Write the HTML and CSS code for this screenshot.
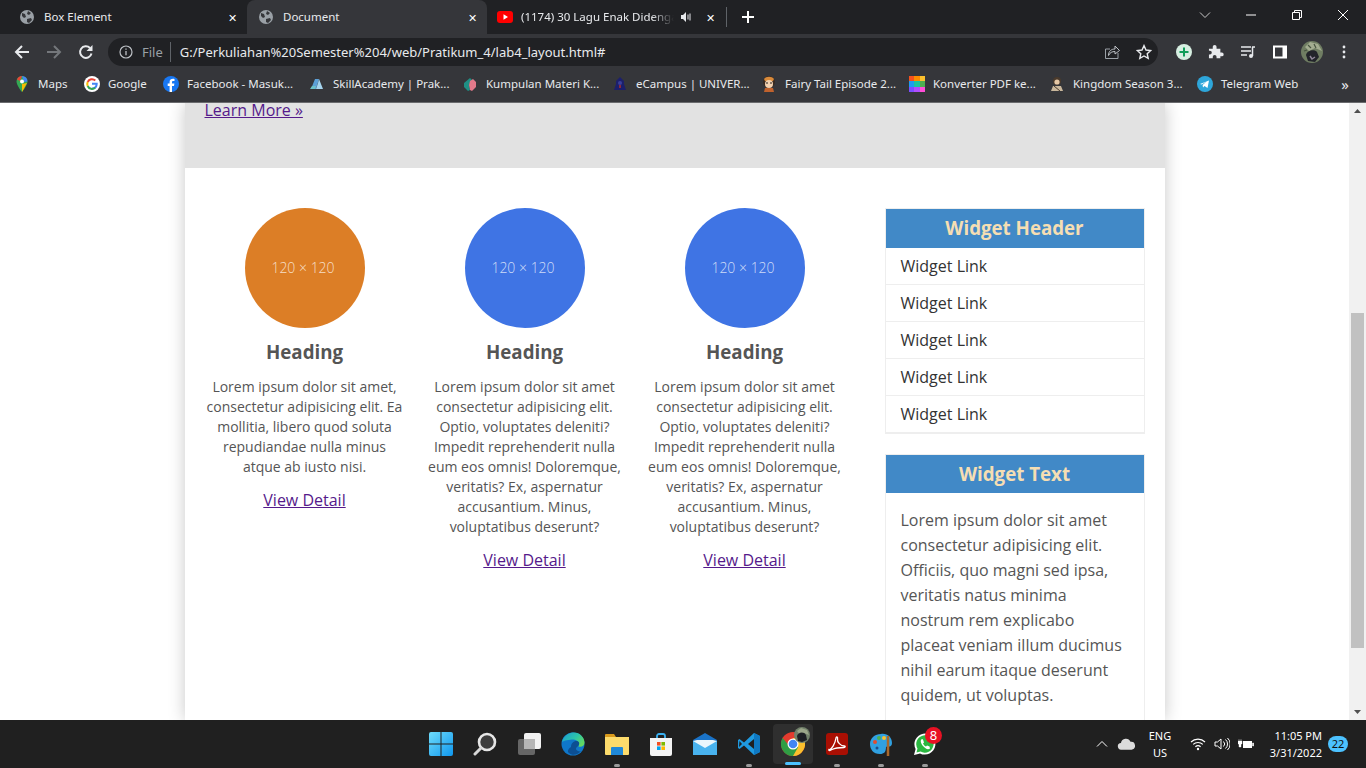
FILE: index.html
```html
<!DOCTYPE html>
<html lang="en">
<head>
  <meta charset="UTF-8">
  <title>Document</title>
  <link rel="stylesheet" href="styles.css">
</head>
<body>
  <div class="tabstrip">
    <div class="tab">
      <svg class="fav" viewBox="0 0 16 16"><circle cx="8" cy="8" r="7" fill="#9aa0a6"/><path d="M3 4l3 1 1 3-2 1-2-2zM9 2l3 2-2 2-2-1zM8 10l4-1 1 2-3 3-2-1z" fill="#35363a"/></svg>
      <span class="tab-title">Box Element</span>
      <span class="tab-x">✕</span>
    </div>
    <div class="tab tab-active">
      <svg class="fav" viewBox="0 0 16 16"><circle cx="8" cy="8" r="7" fill="#9aa0a6"/><path d="M3 4l3 1 1 3-2 1-2-2zM9 2l3 2-2 2-2-1zM8 10l4-1 1 2-3 3-2-1z" fill="#35363a"/></svg>
      <span class="tab-title">Document</span>
      <span class="tab-x">✕</span>
    </div>
    <div class="tab tab-yt">
      <svg class="fav" viewBox="0 0 16 16"><rect y="2" width="16" height="12" rx="3" fill="#f00"/><path d="M6.500 5.300v5.400L11 8z" fill="#fff"/></svg>
      <span class="tab-title tab-fade">(1174) 30 Lagu Enak Didengar</span>
      <svg class="tab-sound" viewBox="0 0 12 12"><path d="M1 4h2l3-3v10L3 8H1z" fill="#e8eaed"/><path d="M8 3.500v5M10 2.500v7" stroke="#e8eaed" fill="none"/></svg>
      <span class="tab-x">✕</span>
    </div>
    <div class="tab-sep"></div>
    <svg class="newtab" viewBox="0 0 14 14"><path d="M7 1v12M1 7h12" stroke="#fff" stroke-width="2"/></svg>
    <div class="win-controls">
      <svg viewBox="0 0 12 12"><path d="M1 3.500l5 5 5-5" stroke="#c8c8c8" fill="none"/></svg>
      <svg viewBox="0 0 12 12"><path d="M1 6h10" stroke="#fff"/></svg>
      <svg viewBox="0 0 12 12"><path d="M1.500 3.500h7v7h-7zM3.500 3.500v-2h7v7h-2" stroke="#fff" fill="none"/></svg>
      <svg viewBox="0 0 12 12"><path d="M1 1l10 10M11 1L1 11" stroke="#fff"/></svg>
    </div>
  </div>

  <div class="toolbar">
    <button class="tool"><svg viewBox="0 0 16 16"><path d="M15 8H2M8 2L2 8l6 6" stroke="#e8eaed" stroke-width="2" fill="none"/></svg></button>
    <button class="tool"><svg viewBox="0 0 16 16"><path d="M1 8h13M8 2l6 6-6 6" stroke="#74777b" stroke-width="2" fill="none"/></svg></button>
    <button class="tool"><svg viewBox="0 0 16 16"><path d="M13.500 9.500A5.800 5.800 0 1 1 12 4" stroke="#e8eaed" stroke-width="2" fill="none"/><path d="M14.500 1v6h-6z" fill="#e8eaed"/></svg></button>
    <div class="omnibox">
      <svg class="omni-info" viewBox="0 0 14 14"><circle cx="7" cy="7" r="6" stroke="#bdc1c6" stroke-width="1.200" fill="none"/><path d="M7 6v4.200M7 3.400v1.400" stroke="#bdc1c6" stroke-width="1.300"/></svg>
      <span class="omni-file">File</span>
      <span class="omni-sep"></span>
      <span class="omni-url">G:/Perkuliahan%20Semester%204/web/Pratikum_4/lab4_layout.html#</span>
      <svg class="omni-share" viewBox="0 0 16 16"><path d="M14 9v5.500H1.500V5H6" stroke="#9aa0a6" fill="none"/><path d="M4.500 11.500c0-4.500 3-6.500 6.500-6.500V2l4.500 4.500L11 10V7.500c-3 0-5 1-6.500 4z" stroke="#bdc1c6" fill="none"/></svg>
      <svg class="omni-star" viewBox="0 0 16 16"><path d="M8 1.600l2 4.400 4.700.5-3.500 3.200 1 4.700L8 12l-4.200 2.400 1-4.700-3.500-3.200L6 6z" stroke="#e8eaed" stroke-width="1.400" fill="none"/></svg>
    </div>
    <button class="tool tool-first"><svg viewBox="0 0 16 16"><circle cx="8" cy="8" r="8" fill="#d7efe2"/><path d="M8 3.500v9M3.500 8h9" stroke="#0f9d58" stroke-width="2"/></svg></button>
    <button class="tool"><svg viewBox="0 0 16 16"><path d="M1 5h4V3a2 2 0 0 1 4 0v2h4v4h1.500a2 2 0 0 1 0 4H13v2H9v-1.500a2 2 0 0 0-4 0V15H1v-4h1a2 2 0 0 0 0-4H1z" fill="#e8eaed" transform="scale(.95)"/></svg></button>
    <button class="tool"><svg viewBox="0 0 16 16"><path d="M1 3h10M1 7h10M1 11h6" stroke="#e8eaed" stroke-width="1.500"/><path d="M12 3h3M12.500 3v9" stroke="#e8eaed" stroke-width="1.500" fill="none"/><circle cx="11" cy="12" r="2" fill="#e8eaed"/></svg></button>
    <button class="tool"><svg viewBox="0 0 16 16"><path d="M1 1.500h14v13H1z" fill="#fff"/><path d="M3 3.500h7.500v9H3z" fill="#35363a"/></svg></button>
    <button class="tool"><svg class="avatar" viewBox="0 0 22 22"><circle cx="11" cy="11" r="11" fill="#6f7d62"/><path d="M4 6l5-5 8 2 4 7-7-3-6 3z" fill="#a3ad90"/><path d="M7 4l3 3M13 3l2 4M3 10l3-1" stroke="#47543f" stroke-width="1.200"/><path d="M5 14c1-5 9-6 11-3l2 5-4 5-7-1z" fill="#22242a"/><path d="M9 15l2 3 3-2" stroke="#8f8698" stroke-width="1.500" fill="none"/></svg></button>
    <button class="tool"><svg viewBox="0 0 16 16"><circle cx="8" cy="3" r="1.400" fill="#e8eaed"/><circle cx="8" cy="8" r="1.400" fill="#e8eaed"/><circle cx="8" cy="13" r="1.400" fill="#e8eaed"/></svg></button>
  </div>

  <div class="bookmarks">
    <a class="bm"><svg viewBox="0 0 16 16"><path d="M8 0a5.500 5.500 0 0 0-5.500 5.500C2.500 9.500 8 16 8 16s5.500-6.500 5.500-10.500A5.500 5.500 0 0 0 8 0z" fill="#34a853"/><path d="M3 3.500A5.500 5.500 0 0 1 8 0l-2 5z" fill="#ea4335"/><path d="M8 0a5.500 5.500 0 0 1 5.500 5.500L10 6z" fill="#4285f4"/><path d="M8 16l5-9-5 1z" fill="#fbbc04"/><circle cx="8" cy="5.500" r="2" fill="#fff"/></svg>Maps</a>
    <a class="bm"><svg viewBox="0 0 16 16"><circle cx="8" cy="8" r="8" fill="#fff"/><path d="M8 7.800h4.700c0 3-2 4.600-4.700 4.600" stroke="#4285f4" stroke-width="2" fill="none"/><path d="M11.300 4.500A4.800 4.800 0 0 0 3.700 6" stroke="#ea4335" stroke-width="2" fill="none"/><path d="M3.700 6a4.800 4.800 0 0 0 0 4" stroke="#fbbc04" stroke-width="2" fill="none"/><path d="M3.700 10a4.800 4.800 0 0 0 7.500 1.800" stroke="#34a853" stroke-width="2" fill="none"/></svg>Google</a>
    <a class="bm"><svg viewBox="0 0 16 16"><circle cx="8" cy="8" r="8" fill="#1877f2"/><path d="M9 16v-6h2l.4-2.400H9V6.300c0-.8.300-1.200 1.300-1.200h1.200V3c-2.800-.5-4.900.3-4.900 3v1.600H4.700V10h1.900v6z" fill="#fff"/></svg>Facebook - Masuk...</a>
    <a class="bm"><svg viewBox="0 0 16 16"><path d="M2 13l4-10h4L7 13z" fill="#5c9fd6"/><path d="M7 13l2-6 1-4 4 10z" fill="#a5d4ee"/><path d="M1 13h5l1-3H3z" fill="#6cc1c9"/></svg>SkillAcademy | Prak...</a>
    <a class="bm"><svg viewBox="0 0 16 16"><path d="M2 7l6-5 2 2-3 5 1 5-2 1-4-4z" fill="#1f8f84"/><path d="M8 5l3-2 3 3v5l-4 4-2-1-1-5z" fill="#e2798a"/></svg>Kumpulan Materi K...</a>
    <a class="bm"><svg viewBox="0 0 16 16"><path d="M8 1l4 4v3l2 6H2l2-6V5z" fill="#1c1f6b"/><circle cx="8" cy="7" r="2" fill="#3a3f9a"/><path d="M7 9h2v3H7z" fill="#8a2a3a"/></svg>eCampus | UNIVER...</a>
    <a class="bm"><svg viewBox="0 0 16 16"><circle cx="8" cy="6" r="6" fill="#3a2a20"/><path d="M3 3c2-3 8-3 10 0l-1 2H4z" fill="#d98a3a"/><circle cx="8" cy="8" r="4" fill="#f3d2b0"/><path d="M4 12h8l1 4H3z" fill="#c0622d"/><path d="M5 7h2M9 7h2" stroke="#222"/></svg>Fairy Tail Episode 2...</a>
    <a class="bm"><svg viewBox="0 0 16 16"><path d="M0 0h5v5H0z" fill="#f4511e"/><path d="M5 0h6v5H5z" fill="#fb8c00"/><path d="M11 0h5v5h-5z" fill="#fbc02d"/><path d="M0 5h5v6H0z" fill="#1e9bf0"/><path d="M5 5h6v6H5z" fill="#19c6a0"/><path d="M11 5h5v6h-5z" fill="#4caf50"/><path d="M0 11h5v5H0z" fill="#7c4dff"/><path d="M5 11h6v5H5z" fill="#b04dff"/><path d="M11 11h5v5h-5z" fill="#ff4dd8"/></svg>Konverter PDF ke...</a>
    <a class="bm"><svg viewBox="0 0 16 16"><circle cx="8" cy="5" r="4" fill="#4a3a2c"/><circle cx="8" cy="6" r="2.600" fill="#e5c7a5"/><path d="M4 10h8l2 5H2z" fill="#c9b79c"/><path d="M5 10l6 5" stroke="#4a3a2c"/></svg>Kingdom Season 3...</a>
    <a class="bm"><svg viewBox="0 0 16 16"><circle cx="8" cy="8" r="8" fill="#2ea6da"/><path d="M3 8l9-3.500-1.500 7.500-3-2-1.500 1.500-.4-2.500 4-3.500-5 3z" fill="#fff"/></svg>Telegram Web</a>
    <span class="bm-more">»</span>
  </div>

  <div class="viewport">
    <div class="page">
      <div class="container">
        <section class="hero">
          <a class="link" href="#">Learn More »</a>
        </section>
        <div class="content">
          <div class="card">
            <div class="circle circle-orange">120 × 120</div>
            <h3>Heading</h3>
            <p>Lorem ipsum dolor sit amet, consectetur adipisicing elit. Ea mollitia, libero quod soluta repudiandae nulla minus atque ab iusto nisi.</p>
            <a class="link" href="#">View Detail</a>
          </div>
          <div class="card">
            <div class="circle">120 × 120</div>
            <h3>Heading</h3>
            <p>Lorem ipsum dolor sit amet consectetur adipisicing elit. Optio, voluptates deleniti? Impedit reprehenderit nulla eum eos omnis! Doloremque, veritatis? Ex, aspernatur accusantium. Minus, voluptatibus deserunt?</p>
            <a class="link" href="#">View Detail</a>
          </div>
          <div class="card">
            <div class="circle">120 × 120</div>
            <h3>Heading</h3>
            <p>Lorem ipsum dolor sit amet consectetur adipisicing elit. Optio, voluptates deleniti? Impedit reprehenderit nulla eum eos omnis! Doloremque, veritatis? Ex, aspernatur accusantium. Minus, voluptatibus deserunt?</p>
            <a class="link" href="#">View Detail</a>
          </div>
          <aside class="sidebar">
            <div class="widget">
              <h4>Widget Header</h4>
              <ul>
                <li>Widget Link</li>
                <li>Widget Link</li>
                <li>Widget Link</li>
                <li>Widget Link</li>
                <li>Widget Link</li>
              </ul>
            </div>
            <div class="widget">
              <h4 class="h4-text">Widget Text</h4>
              <p>Lorem ipsum dolor sit amet consectetur adipisicing elit. Officiis, quo magni sed ipsa, veritatis natus minima nostrum rem explicabo placeat veniam illum ducimus nihil earum itaque deserunt quidem, ut voluptas.</p>
            </div>
          </aside>
        </div>
      </div>
    </div>
    <div class="scrollbar">
      <svg class="sb-arrow" viewBox="0 0 17 17"><path d="M5 10l3.500-4 3.500 4z" fill="#505050"/></svg>
      <div class="sb-track"><div class="sb-thumb"></div></div>
      <svg class="sb-arrow" viewBox="0 0 17 17"><path d="M5 7l3.500 4 3.500-4z" fill="#505050"/></svg>
    </div>
  </div>

  <footer class="taskbar">
    <div class="task-icons">
      <div class="task"><svg viewBox="0 0 24 24"><defs><linearGradient id="winlogo" x1="0" y1="0" x2="1" y2="1"><stop offset="0" stop-color="#6fdcfb"/><stop offset="1" stop-color="#0f97ee"/></linearGradient></defs><path d="M0 2a2 2 0 0 1 2-2h9.500v11.500H0zM12.500 0H22a2 2 0 0 1 2 2v9.500H12.500zM0 12.500h11.500V24H2a2 2 0 0 1-2-2zM12.500 12.500H24V22a2 2 0 0 1-2 2h-9.500z" fill="url(#winlogo)"/></svg></div>
      <div class="task"><svg viewBox="0 0 24 24"><circle cx="14" cy="10" r="8" stroke="#e6e6e6" stroke-width="2.600" fill="#3c3c3c"/><path d="M8 16l-6 6" stroke="#d8d8d8" stroke-width="3" stroke-linecap="round"/></svg></div>
      <div class="task"><svg viewBox="0 0 24 24"><rect x="1" y="7" width="17" height="16" rx="2" fill="#666"/><rect x="7" y="1" width="17" height="16" rx="2" fill="#f2f2f2"/><rect x="7" y="7" width="11" height="10" fill="#b5b5b5"/></svg></div>
      <div class="task"><svg viewBox="0 0 24 24"><defs><linearGradient id="edgetop" x1="0" y1="0" x2="1" y2=".6"><stop offset="0" stop-color="#1a9ad6"/><stop offset=".6" stop-color="#2cc5a8"/><stop offset="1" stop-color="#62d862"/></linearGradient></defs><circle cx="12" cy="12" r="11.500" fill="#0f77c9"/><path d="M1 10C3 2 10 .500 13 .500c6 0 10.500 5 10.500 10 0 4-3.500 5-6 4 2-3-1-7-5-7-4.500 0-9.500 1-11.500 2.500z" fill="url(#edgetop)"/><path d="M10 15c0-4 3-6.500 6-6 2.500.5 3 3 1 5-1 1-4 3 0 5 1 .5 2 .500 3 0-3 4-9 5-12 2-2-1.500-1-4 2-6z" fill="#0c4f93"/></svg></div>
      <div class="task task-open"><svg viewBox="0 0 24 24"><path d="M0 3a1 1 0 0 1 1-1h8l2 3h-11z" fill="#d99a1c"/><path d="M0 5h24v17a1 1 0 0 1-1 1H1a1 1 0 0 1-1-1z" fill="#fcdb6c"/><path d="M7 15h10a1 1 0 0 1 1 1v7H6v-7a1 1 0 0 1 1-1z" fill="#1f88d8"/></svg></div>
      <div class="task"><svg viewBox="0 0 24 24"><path d="M8 7V4a2 2 0 0 1 2-2h4a2 2 0 0 1 2 2v3" stroke="#3ab0f0" stroke-width="1.800" fill="none"/><path d="M1 6h22v16a2 2 0 0 1-2 2H3a2 2 0 0 1-2-2z" fill="#f4f4f4"/><path d="M8 10h3.600v3.600H8z" fill="#f25022"/><path d="M12.400 10H16v3.600h-3.600z" fill="#7fba00"/><path d="M8 14.400h3.600V18H8z" fill="#00a4ef"/><path d="M12.400 14.400H16V18h-3.600z" fill="#ffb900"/></svg></div>
      <div class="task"><svg viewBox="0 0 24 24"><path d="M0 8l12-7 12 7v14H0z" fill="#1a73c8"/><path d="M0 9h24v14H0z" fill="#49b3ef"/><path d="M0 9l12 7 12-7-4-1H4z" fill="#eaf6fd"/></svg></div>
      <div class="task task-open"><svg viewBox="0 0 24 24"><path d="M17 1l6 3v16l-6 3L7 13.500 2.500 17 1 16V8l1.500-1L7 10.500z" fill="#1f9ae0"/><path d="M17 7l-6 5 6 5z" fill="#202020"/><path d="M2.500 9l-.500 6 3-3z" fill="#202020"/><path d="M17 1l6 3v16l-6 3z" fill="#0e78c2"/></svg></div>
      <div class="task task-active">
        <svg viewBox="0 0 24 24"><circle cx="12" cy="12" r="12" fill="#e33b2e"/><path d="M12 24a12 12 0 0 0 10.400-18H12l-2 8z" fill="#fbc02d"/><path d="M1.600 6A12 12 0 0 0 12 24l5.200-9-8 0z" fill="#2f9e44"/><circle cx="12" cy="12" r="5.500" fill="#fff"/><circle cx="12" cy="12" r="4.300" fill="#4285f4"/></svg>
        <svg class="task-avatar" viewBox="0 0 16 16"><circle cx="8" cy="8" r="8" fill="#71806a"/><path d="M3 4l4-3 6 2 2 5-5-2-4 2z" fill="#9ba68a"/><path d="M3 9c1-4 7-5 9-1l1 5-5 2-4-1z" fill="#1d1f24"/></svg>
      </div>
      <div class="task task-open"><svg viewBox="0 0 24 24"><rect x="1" y="1" width="22" height="22" rx="3" fill="#a90f03"/><path d="M4 18c3-1 6-6 7-12 .500-2 2-1 1.500 1-.500 3 3 7 7 7 1 0 1 1.500-.500 1.500-3 0-9 .500-12 2-2 1-3.500 2-3-.500z" stroke="#fff" stroke-width="1.300" fill="none"/></svg></div>
      <div class="task task-open"><svg viewBox="0 0 24 24"><path d="M12 2c6-1 11 3 11 9 0 3-2 4-4 3l-2 1c0 5-2 7-6 7C4 22 1 17 1 12 1 6 6 2 12 2z" fill="#30a0e0"/><circle cx="6" cy="10" r="2" fill="#e34c2e"/><circle cx="10" cy="6" r="2" fill="#4caf50"/><circle cx="15" cy="6" r="2" fill="#fbc02d"/><circle cx="8" cy="16" r="1.500" fill="#1c4f8a"/><path d="M19 4v20" stroke="#a8682c" stroke-width="2.500"/></svg></div>
      <div class="task task-open">
        <svg viewBox="0 0 24 24"><path d="M1 23l1.600-6A10.500 10.500 0 1 1 7 21.400z" fill="#fff"/><path d="M3.500 20.500l1-4A8.700 8.700 0 1 1 7.600 19.500z" fill="#2bb741"/><path d="M9 7c-2 1-1.500 4 1 7s5 4 7 2.500l-.500-2-2.500-1-1 1c-1.500-.500-2.500-2-3-3l1-1-1-3z" fill="#fff"/></svg>
        <span class="task-badge">8</span>
      </div>
    </div>
    <div class="tray">
      <svg class="tray-chev" viewBox="0 0 12 12"><path d="M1 8.500l5-5 5 5" stroke="#fff" fill="none"/></svg>
      <svg class="tray-cloud" viewBox="0 0 16 16"><path d="M4 13a3 3 0 0 1-.500-6 4.500 4.500 0 0 1 8.500-1 3.500 3.500 0 0 1 1 7z" fill="#dcdcdc"/></svg>
      <div class="tray-lang">ENG<br>US</div>
      <svg class="tray-icon tray-wifi" viewBox="0 0 16 16"><path d="M1 6a10 10 0 0 1 14 0M3.200 8.400a7 7 0 0 1 9.600 0M5.400 10.700a4 4 0 0 1 5.200 0" stroke="#fff" stroke-width="1.200" fill="none"/><circle cx="8" cy="13" r="1.200" fill="#fff"/></svg>
      <svg class="tray-icon" viewBox="0 0 16 16"><path d="M1 6h2.500L7 3v10l-3.500-3H1z" stroke="#fff" fill="none"/><path d="M9.500 5.500a3.500 3.500 0 0 1 0 5M11.500 3.500a6 6 0 0 1 0 9M13.500 2a8 8 0 0 1 0 12" stroke="#fff" fill="none"/></svg>
      <svg class="tray-icon" viewBox="0 0 16 16"><path d="M5 5h9v7H5z" fill="#fff"/><path d="M14.500 7h1.300v3h-1.300zM1 3v2M3 3v2M0 5h4v3H3v3H1V8H0z" fill="#fff" stroke="#fff" stroke-width=".4"/></svg>
      <div class="tray-clock">11:05 PM<br>3/31/2022</div>
      <span class="tray-badge">22</span>
    </div>
  </footer>
</body>
</html>
```

FILE: styles.css
```css
* {
  box-sizing: border-box;
}
body {
  margin: 0;
  height: 768px;
  overflow: hidden;
  display: flex;
  flex-direction: column;
  font-family: 'Open Sans', Arial, sans-serif;
  background: #fff;
}

/* browser chrome */
.tabstrip {
  height: 34px;
  flex: none;
  display: flex;
  align-items: center;
  padding-left: 8px;
  background: #202124;
  color: #e8eaed;
  font-family: 'Noto Sans', Arial, sans-serif;
  font-size: 11.5px;
}
.tab {
  width: 239px;
  height: 34px;
  flex: none;
  display: flex;
  align-items: center;
  padding: 0 7px 0 11px;
}
.tab-active {
  width: 240px;
  background: #35363a;
  border-radius: 8px 8px 0 0;
}
.tab-yt {
  width: 239px;
  padding-left: 10px;
  padding-right: 8px;
}
.fav {
  width: 16px;
  height: 16px;
  flex: none;
  margin-right: 9px;
}
.tab-yt .fav {
  margin-right: 8px;
}
.tab-title {
  flex: 1;
  white-space: nowrap;
  overflow: hidden;
  margin-top: -2px;
}
.tab-fade {
  color: #e8eaed;
  -webkit-mask-image: linear-gradient(90deg, #000 85%, transparent);
  mask-image: linear-gradient(90deg, #000 85%, transparent);
}
.tab-sound {
  width: 12px;
  height: 12px;
  flex: none;
  margin: 0 10px 0 6px;
}
.tab-x {
  width: 16px;
  flex: none;
  font-size: 11px;
  color: #fff;
  text-align: center;
}
.tab-sep {
  width: 1px;
  height: 20px;
  background: #5f6368;
  flex: none;
}
.newtab {
  width: 14px;
  height: 14px;
  margin-left: 14px;
  flex: none;
}
.win-controls {
  margin-left: auto;
  display: flex;
  align-items: center;
  padding-right: 17px;
  gap: 34px;
  height: 100%;
  margin-top: -5px;
}
.win-controls svg {
  width: 12px;
  height: 12px;
}

.toolbar {
  height: 36px;
  flex: none;
  display: flex;
  align-items: center;
  padding-left: 6px;
  background: #35363a;
}
.tool {
  width: 32px;
  height: 32px;
  flex: none;
  padding: 0;
  border: 0;
  background: none;
  display: flex;
  align-items: center;
  justify-content: center;
}
.tool svg {
  width: 16px;
  height: 16px;
}
.tool svg.avatar {
  width: 22px;
  height: 22px;
}
.tool-first {
  margin-left: 10px;
}
.omnibox {
  flex: none;
  width: 1050px;
  height: 28px;
  margin-left: 6px;
  border-radius: 14px;
  background: #202124;
  display: flex;
  align-items: center;
  padding-left: 11px;
  font-family: 'Noto Sans', Arial, sans-serif;
  font-size: 13px;
  color: #e8eaed;
}
.omni-info {
  width: 14px;
  height: 14px;
  flex: none;
}
.omni-file {
  color: #9aa0a6;
  margin-left: 9px;
}
.omni-sep {
  width: 1px;
  height: 20px;
  background: #5f6368;
  margin: 0 9px 0 7px;
}
.omni-url {
  flex: 1;
  white-space: nowrap;
}
.omni-share,
.omni-star {
  width: 16px;
  height: 16px;
  flex: none;
}
.omni-star {
  margin: 0 6px 0 16px;
}

.bookmarks {
  height: 33px;
  flex: none;
  display: grid;
  grid-template-columns: 70px 79px 146px 153px 150px 149px 148px 140px 148px 140px 1fr;
  align-items: center;
  padding: 0 0 5px 14px;
  background: #35363a;
  border-bottom: 1px solid #6a6b6e;
  color: #e8eaed;
  font-family: 'Noto Sans', Arial, sans-serif;
  font-size: 11.5px;
}
.bm {
  display: flex;
  align-items: center;
  white-space: nowrap;
}
.bm svg {
  width: 16px;
  height: 16px;
  flex: none;
  margin-right: 8px;
}
.bm-more {
  font-size: 15px;
  justify-self: end;
  margin-right: 17px;
}

/* page */
.viewport {
  flex: 1;
  min-height: 0;
  display: flex;
}
.page {
  flex: 1;
  overflow: hidden;
}
.container {
  width: 980px;
  height: 100%;
  margin: 0 auto;
  background: #fff;
  box-shadow: 0 0 16px rgba(0, 0, 0, 0.22);
}
.hero {
  height: 65px;
  padding-left: 20px;
  background: #e2e2e2;
  font-size: 16px;
  line-height: 14px;
}
.link {
  color: #551a8b;
  font-size: 16px;
}
.content {
  display: flex;
  padding: 40px 20px 0;
  gap: 20px;
}
.card {
  width: 200px;
  flex: none;
  text-align: center;
  color: #555;
}
.circle {
  width: 120px;
  height: 120px;
  margin: 0 auto;
  padding-right: 3px;
  border-radius: 50%;
  background: #3f74e4;
  color: rgba(255, 255, 255, 0.75);
  font-size: 14px;
  font-weight: 300;
  line-height: 120px;
}
.circle-orange {
  background: #dc7e26;
}
.card h3 {
  margin: 10px 0 0;
  font-size: 18.72px;
  line-height: 28px;
  font-weight: 700;
}
.card p {
  margin: 11px 0 12px;
  font-size: 14px;
  line-height: 20px;
}
.sidebar {
  width: 260px;
  flex: none;
  margin-left: 20px;
}
.widget {
  border: 1px solid #eee;
  margin-bottom: 20px;
}
.widget h4 {
  margin: 0;
  height: 39px;
  background: #4189c7;
  color: #f5deb3;
  font-size: 18.72px;
  font-weight: 700;
  line-height: 38px;
  text-align: center;
}
.widget .h4-text {
  height: 38px;
  line-height: 37px;
}
.widget ul {
  margin: 0;
  padding: 0;
  list-style: none;
}
.widget li {
  height: 37px;
  padding-left: 15px;
  border-bottom: 1px solid #eee;
  color: #333;
  font-size: 16px;
  line-height: 36px;
}
.widget p {
  margin: 0;
  padding: 15px 15px;
  color: #555;
  font-size: 16px;
  line-height: 25px;
}

.scrollbar {
  width: 17px;
  flex: none;
  display: flex;
  flex-direction: column;
  background: #f1f1f1;
}
.sb-arrow {
  width: 17px;
  height: 17px;
  flex: none;
}
.sb-track {
  flex: 1;
  padding: 193px 2px 0;
}
.sb-thumb {
  height: 335px;
  background: #c1c1c1;
}

/* windows taskbar */
.taskbar {
  height: 48px;
  flex: none;
  position: relative;
  display: flex;
  background: #202020;
  color: #fff;
  font-family: 'Noto Sans', Arial, sans-serif;
  font-size: 11px;
}
.task-icons {
  display: flex;
  margin: 0 auto;
}
.task {
  width: 44px;
  height: 48px;
  position: relative;
  display: flex;
  align-items: center;
  justify-content: center;
}
.task svg {
  width: 24px;
  height: 24px;
}
.task-open::after,
.task-active::after {
  content: "";
  position: absolute;
  left: 19px;
  bottom: 1px;
  width: 6px;
  height: 3px;
  border-radius: 2px;
  background: #9a9a9a;
}
.task-active {
  width: 40px;
  height: 40px;
  margin: 4px 2px;
  border-radius: 4px;
  background: #2f2f2f;
}
.task-active::after {
  left: 12px;
  bottom: -1px;
  width: 16px;
  background: #4cc2ff;
}
.task svg.task-avatar {
  position: absolute;
  top: 3px;
  right: 3px;
  width: 16px;
  height: 16px;
}
.task-badge {
  position: absolute;
  top: 7px;
  right: 5px;
  width: 17px;
  height: 17px;
  border-radius: 50%;
  background: #e81123;
  font-size: 13px;
  line-height: 17px;
  text-align: center;
}
.tray {
  position: absolute;
  top: 0;
  right: 0;
  height: 48px;
  width: 272px;
  display: flex;
  align-items: center;
  padding-left: 2px;
}
.tray-chev {
  width: 12px;
  height: 12px;
  flex: none;
}
.tray-cloud {
  width: 18px;
  height: 18px;
  flex: none;
  margin-left: 9px;
}
.tray-lang {
  width: 30px;
  margin-left: 10px;
  text-align: center;
  line-height: 17px;
}
.tray-icon {
  width: 16px;
  height: 16px;
  flex: none;
  margin-left: 8px;
}
.tray-wifi {
  margin-left: 15px;
}
.tray-clock {
  width: 64px;
  margin-left: 4px;
  text-align: right;
  line-height: 17px;
}
.tray-badge {
  width: 20px;
  height: 16px;
  margin-left: 6px;
  border-radius: 8px;
  background: #4cc2ff;
  color: #111;
  font-size: 11px;
  line-height: 16px;
  text-align: center;
}
```
